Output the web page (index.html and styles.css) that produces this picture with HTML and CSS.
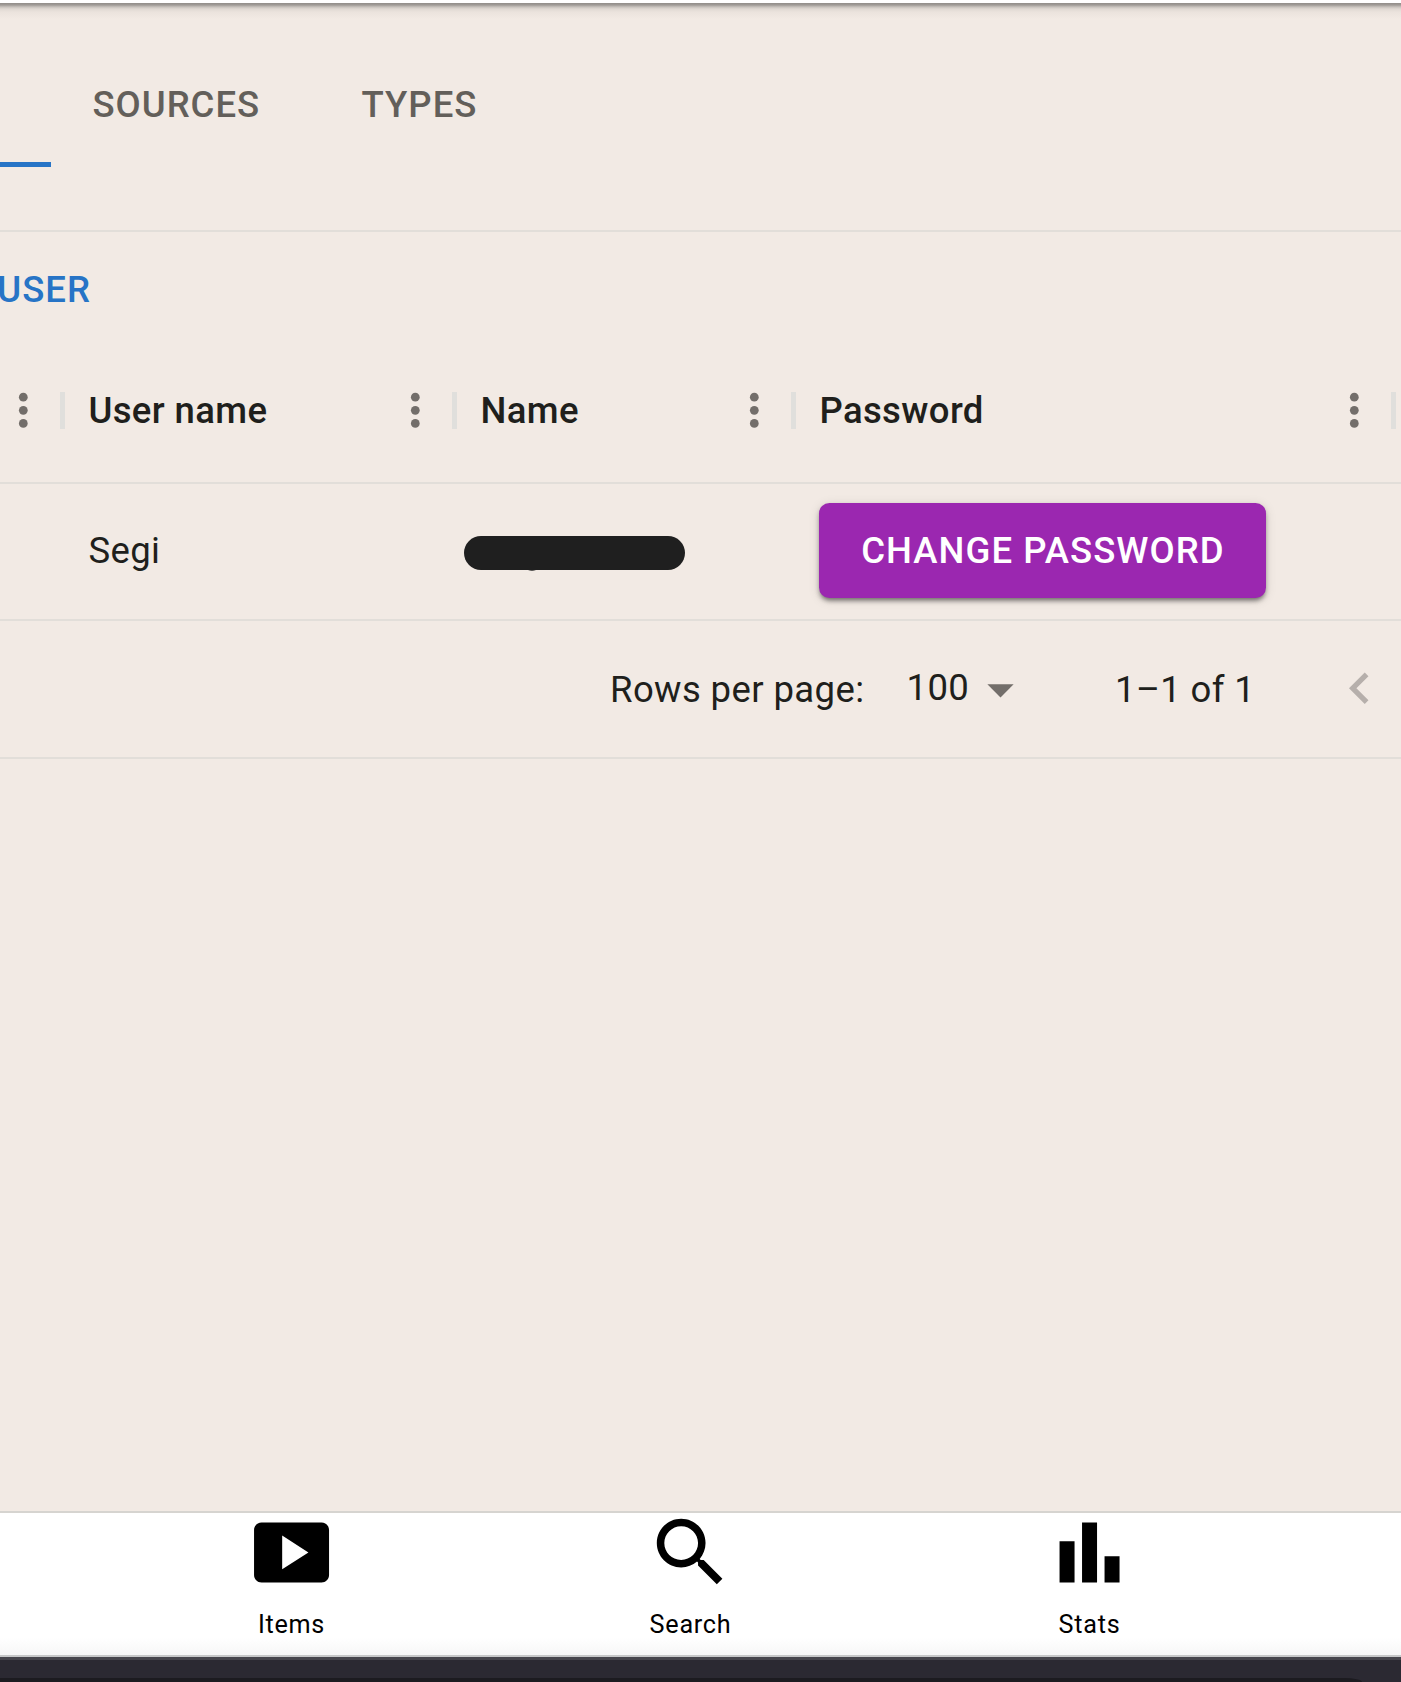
FILE: index.html
```
<!DOCTYPE html>
<html lang="en">
<head>
<meta charset="utf-8">
<title>Users</title>
<link rel="stylesheet" href="styles.css">
</head>
<body>
<div class="app">
  <header class="appbar"></header>
  <main class="content">
    <nav class="tabs">
      <div class="tab tab-active"></div>
      <div class="tab tab-sources">SOURCES</div>
      <div class="tab">TYPES</div>
    </nav>
    <section class="grid">
      <div class="toolbar"><span class="add">USER</span></div>
      <div class="columns">
        <div class="head head-first"><svg class="more" viewBox="0 0 24 24"><circle cx="12" cy="6" r="2"/><circle cx="12" cy="12" r="2"/><circle cx="12" cy="18" r="2"/></svg><i class="sep"></i></div>
        <div class="head"><span>User name</span><svg class="more" viewBox="0 0 24 24"><circle cx="12" cy="6" r="2"/><circle cx="12" cy="12" r="2"/><circle cx="12" cy="18" r="2"/></svg><i class="sep"></i></div>
        <div class="head"><span>Name</span><svg class="more" viewBox="0 0 24 24"><circle cx="12" cy="6" r="2"/><circle cx="12" cy="12" r="2"/><circle cx="12" cy="18" r="2"/></svg><i class="sep"></i></div>
        <div class="head"><span>Password</span><svg class="more" viewBox="0 0 24 24"><circle cx="12" cy="6" r="2"/><circle cx="12" cy="12" r="2"/><circle cx="12" cy="18" r="2"/></svg><i class="sep"></i></div>
      </div>
      <div class="columns row">
        <div class="cell"></div>
        <div class="cell">Segi</div>
        <div class="cell cell-name"><svg class="redacted" viewBox="0 0 221 35"><rect width="221" height="34" rx="17"/><path d="M64 34h8q-4 1.6-8 0z"/></svg></div>
        <div class="cell"><button class="change">CHANGE PASSWORD</button></div>
      </div>
      <div class="pager">
        <span class="pager-label">Rows per page:</span>
        <span class="pager-size">100</span>
        <svg class="drop" viewBox="0 0 24 24"><path d="M7 10l5 5 5-5z"/></svg>
        <span class="pager-range">1–1 of 1</span>
        <svg class="prev" viewBox="0 0 24 24"><path d="M15.41 16.09l-4.58-4.59 4.58-4.59L14 5.5l-6 6 6 6z"/></svg>
      </div>
    </section>
  </main>
  <nav class="bottom">
    <div class="item"><svg class="icon" viewBox="0.12 -0.12 24 24"><path d="M20 4H4c-1.1 0-2 .9-2 2v12c0 1.1.9 2 2 2h16c1.1 0 2-.9 2-2V6c0-1.1-.9-2-2-2zM9.5 16.5v-9l7 4.5-7 4.5z"/></svg><span>Items</span></div>
    <div class="item"><svg class="icon" viewBox="0.12 -0.12 24 24"><path d="M15.5 14h-.79l-.28-.27C15.41 12.59 16 11.11 16 9.5 16 5.91 13.09 3 9.5 3S3 5.91 3 9.5 5.91 16 9.5 16c1.61 0 3.09-.59 4.23-1.57l.27.28v.79l5 4.99L20.49 19l-4.99-5zm-6 0C7.01 14 5 11.99 5 9.5S7.01 5 9.5 5 14 7.01 14 9.5 11.99 14 9.5 14z"/></svg><span>Search</span></div>
    <div class="item"><svg class="icon" viewBox="0.12 -0.12 24 24"><path d="M4 9h4v11H4zm12 4h4v7h-4zm-6-9h4v16h-4z"/></svg><span>Stats</span></div>
  </nav>
  <footer class="chrome"><div class="chrome-field"></div></footer>
</div>
</body>
</html>
```
FILE: styles.css
```
* { box-sizing: border-box; }
body {
  margin: 0;
  background: #f2eae4;
  font-family: Roboto, sans-serif;
  font-size: 36.5px;
  letter-spacing: 0.0107em;
  color: #201f1c;
}
.app {
  display: flex;
  flex-direction: column;
  width: 1401px;
  height: 1682px;
  overflow: hidden;
}
.appbar {
  height: 3px;
  flex: none;
  background: #fff;
}
.content {
  flex: 1;
  background: linear-gradient(#918d89, #a09b97 2px, #c8c2bd 4px, #e0d9d3 6px, #ebe3dd 9px, #f2eae4 16px);
}
.tabs {
  display: flex;
  height: 164px;
  padding-top: 38px;
}
.tab {
  display: flex;
  align-items: center;
  padding: 0 42px;
  font-weight: 500;
  letter-spacing: 0.0275em;
  color: #635f5a;
}
.tab-active {
  width: 51px;
  padding: 0;
  border-bottom: 5px solid #2774c6;
}
.tab-sources {
  width: 268.5px;
  padding-left: 41.5px;
}
.grid {
  margin-top: 63px;
  border-top: 2px solid #e2ded9;
  border-bottom: 2px solid #e2ded9;
}
.toolbar {
  display: flex;
  align-items: center;
  justify-content: flex-end;
  width: 91px;
  height: 106px;
  padding-top: 9px;
}
.add {
  font-weight: 500;
  letter-spacing: 0.0285em;
  color: #2774c6;
}
.columns {
  display: grid;
  grid-template-columns: 65px 392px 339px 600px;
  height: 146px;
  border-bottom: 2px solid #e2ded9;
}
.head {
  display: flex;
  align-items: center;
  justify-content: flex-end;
  padding-left: 23.4px;
  font-weight: 500;
}
.head-first { padding-left: 0; }
.head span { flex: 1; }
.more {
  width: 52.6px;
  height: 52.6px;
  margin-right: 10.4px;
  flex: none;
  fill: #736e6a;
}
.sep {
  width: 5px;
  height: 37px;
  flex: none;
  background: #e0dfdc;
}
.row { height: 137px; }
.cell {
  display: flex;
  align-items: center;
  padding: 0 0 2px 23.4px;
}
.cell-name { padding: 3px 0 0 7px; }
.redacted {
  width: 221px;
  height: 35px;
  fill: #1f1f1f;
}
.change {
  width: 447px;
  height: 95px;
  padding: 0;
  border: 0;
  border-radius: 10.5px;
  background: #9b27b0;
  box-shadow: 0 4px 4px -2px rgba(0, 0, 0, 0.35), 0 3px 5px rgba(0, 0, 0, 0.22), 0 2px 12px rgba(0, 0, 0, 0.12);
  color: #fff;
  font: 500 36.5px Roboto, sans-serif;
  letter-spacing: 0.0285em;
}
.pager {
  display: flex;
  align-items: center;
  height: 136px;
  padding-left: 610px;
}
.pager-label { width: 296.5px; }
.pager-size {
  width: 62.5px;
  padding-bottom: 4px;
}
.drop {
  width: 63px;
  height: 63px;
  fill: #736e6a;
}
.pager-range {
  width: 212px;
  padding-left: 83px;
  white-space: nowrap;
}
.prev {
  width: 63px;
  height: 63px;
  margin-left: 84px;
  fill: #b6afab;
}
.bottom {
  display: grid;
  grid-template-columns: 399px 399px 399px;
  height: 146px;
  padding-left: 92px;
  border-top: 2px solid #d6d4d0;
  border-bottom: 2px solid #c7c8c9;
  background: linear-gradient(#fff 125px, #f7f7f7);
}
.item {
  display: flex;
  flex-direction: column;
  align-items: center;
  font-size: 25.2px;
  line-height: 30px;
  letter-spacing: 0.029em;
  color: #000;
}
.icon {
  width: 90px;
  height: 90px;
  margin: -5.6px 0 13px;
}
.chrome {
  height: 25px;
  padding-top: 18px;
  border-top: 3px solid #47464d;
  background: #2b2932;
}
.chrome-field {
  width: 1362px;
  height: 4px;
  border-top-right-radius: 18px 4px;
  background: #1c1b20;
}
```
